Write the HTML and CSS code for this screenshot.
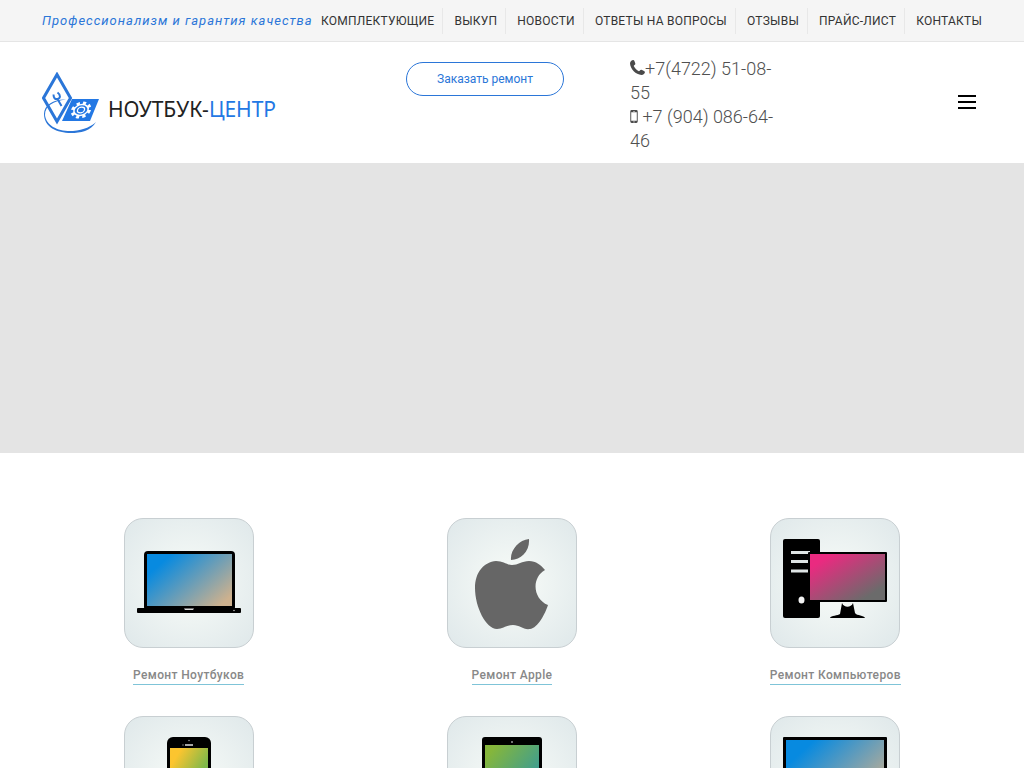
FILE: index.html
```html
<!DOCTYPE html>
<html lang="ru">
<head>
<meta charset="utf-8">
<meta name="viewport" content="width=device-width, initial-scale=1">
<title>Ноутбук-Центр</title>
<link rel="stylesheet" href="styles.css">
</head>
<body>
<div class="topbar">
  <span class="tagline">Профессионализм и гарантия качества</span>
  <nav class="topnav">
    <a href="#">Комплектующие</a>
    <a href="#">Выкуп</a>
    <a href="#">Новости</a>
    <a href="#">Ответы на вопросы</a>
    <a href="#">Отзывы</a>
    <a href="#">Прайс-лист</a>
    <a href="#">Контакты</a>
  </nav>
</div>
<header class="header">
  <a class="logo" href="#">
    <svg class="logo-mark" viewBox="0 0 58 62" aria-hidden="true">
      <path d="M15 2.500 28.500 26 15 49.500 1.500 26Z" fill="none" stroke="#2b76d8" stroke-width="3"/>
      <path d="M30 27H57L48 49H20Z" fill="#2378e4"/>
      <path d="M24 27.500C11 29 3 34 3 43C4 54 17 60 31 59C42 58 50 54 54 50C49 59 38 61 29 61C15 61 2 55 2 42C2 33 12 27 24 27.500Z" fill="#2b76d8"/>
      <path d="M11.500 22.500C11.500 26 13 27.500 15.500 27C18.500 26.500 19 23 15.500 20.500M15.500 27 19.500 34" fill="none" stroke="#2b76d8" stroke-width="2"/>
      <g transform="translate(39 38) skewX(-14)">
        <ellipse rx="8.500" ry="7" fill="none" stroke="#fff" stroke-width="3" stroke-dasharray="3.100 3"/>
        <ellipse rx="7" ry="5.500" fill="#2378e4" stroke="#fff" stroke-width="1.500"/>
        <ellipse rx="3.500" ry="2.800" fill="none" stroke="#fff" stroke-width="1.200"/>
      </g>
    </svg>
    <span class="logo-text">НОУТБУК-<span class="logo-accent">ЦЕНТР</span></span>
  </a>
  <button class="order" type="button">Заказать ремонт</button>
  <div class="phones">
    <div><svg class="ico-phone" viewBox="0 0 14 14" aria-hidden="true"><path d="M3.200 0C4 .1 5 3 5 3.700C5 4.500 3.500 5 3.500 5.700C4.400 7.700 6.200 9.500 8.300 10.500C9 10.500 9.500 9 10.300 9C11 9 13.800 10.500 14 11C14 12.800 12.500 14 10.700 14C5.500 13.700.3 8.500 0 3.300C0 1.500 1.500 0 3.200 0Z" fill="#4a4a4a"/></svg>+7(4722) 51-08-55</div>
    <div><svg class="ico-mobile" viewBox="0 0 8 14" aria-hidden="true"><path fill-rule="evenodd" d="M1.500 0H6.500Q8 0 8 1.500V12.500Q8 14 6.500 14H1.500Q0 14 0 12.500V1.500Q0 0 1.500 0ZM1 2.500V11.500H7V2.500ZM3 1V1.500H5V1ZM4 12.200A.6.6 0 1 0 4 13.400A.6.6 0 1 0 4 12.200Z" fill="#4a4a4a"/></svg> +7 (904) 086-64-46</div>
  </div>
  <button class="burger" type="button" aria-label="Меню"><i></i><i></i><i></i></button>
</header>
<div class="banner"></div>
<svg width="0" height="0" class="defs" aria-hidden="true">
  <defs>
    <linearGradient id="blue" x1="0" y1="0.200" x2="1" y2="0.900"><stop offset=".1" stop-color="#078ae0"/><stop offset=".95" stop-color="#cdb18e"/></linearGradient>
    <linearGradient id="pink" x1="0" y1="0" x2="1" y2="1"><stop offset=".15" stop-color="#ea2a80"/><stop offset=".85" stop-color="#6b6b6b"/></linearGradient>
    <linearGradient id="yellow" x1="0" y1="0" x2="1" y2="1"><stop offset=".15" stop-color="#fcc52f"/><stop offset=".6" stop-color="#7fb84a"/></linearGradient>
    <linearGradient id="green" x1="0" y1="0" x2="1" y2="1"><stop offset=".1" stop-color="#85b63b"/><stop offset=".7" stop-color="#3b9c94"/></linearGradient>
  </defs>
</svg>
<main class="services">
  <a class="service" href="#">
    <svg class="tile" viewBox="0 0 128 128" aria-hidden="true">
      <rect x="19" y="32" width="91" height="60" rx="4"/><rect x="12" y="89" width="104" height="5" rx="1"/>
      <rect x="22" y="35" width="85" height="52" fill="url(#blue)"/>
      <path d="M59 89.500H69L68 91H60Z" fill="#ddd"/><circle cx="109" cy="91.500" r=".7" fill="#ddd"/>
    </svg>
    <span class="caption">Ремонт Ноутбуков</span>
  </a>
  <a class="service" href="#">
    <svg class="tile" viewBox="0 0 128 128" aria-hidden="true">
      <path d="M81 20C82 32 73 41 63 41C62 31 71 21 81 20ZM64 46C70 46 74 42 81 42C88 42 93 46 97 51C83 59 85 80 100 86C97 95 90 109 82 110C75 111 72 106 65 106C58 106 55 110 49 110C38 110 27 88 27 69C27 53 36 43 48 42C55 42 59 46 64 46Z" fill="#666"/>
    </svg>
    <span class="caption">Ремонт Apple</span>
  </a>
  <a class="service" href="#">
    <svg class="tile" viewBox="0 0 128 128" aria-hidden="true">
      <rect x="12" y="20" width="37" height="79" rx="2"/>
      <path d="M20 33.500H39M20 42.500H37M20 52H37" stroke="#dfe5e5" stroke-width="3"/><ellipse cx="30.500" cy="81" rx="3" ry="3.500" fill="#f2f2f2"/>
      <rect x="37" y="33" width="79" height="50" rx="1"/><rect x="39" y="35" width="75" height="46" fill="url(#pink)"/>
      <path d="M71 84C73 89 80 89 82 84L84 94C86 97 93 96 94 99H59C60 96 67 97 69 95Z"/>
    </svg>
    <span class="caption">Ремонт Компьютеров</span>
  </a>
  <a class="service" href="#" aria-label="Смартфоны">
    <svg class="tile" viewBox="0 0 128 128" aria-hidden="true">
      <rect x="42" y="20" width="44" height="88" rx="6"/><rect x="45" y="31" width="38" height="64" fill="url(#yellow)"/>
      <path d="M60 28H68" stroke="#ddd" stroke-width="1.500"/><circle cx="64" cy="23.500" r=".8" fill="#999"/><circle cx="58" cy="28" r=".7" fill="#999"/>
    </svg>
  </a>
  <a class="service" href="#" aria-label="Планшеты">
    <svg class="tile" viewBox="0 0 128 128" aria-hidden="true">
      <rect x="34" y="20" width="60" height="88" rx="3"/><rect x="37" y="28" width="54" height="70" fill="url(#green)"/><circle cx="64" cy="25" r="1" fill="#999"/>
    </svg>
  </a>
  <a class="service" href="#" aria-label="Мониторы">
    <svg class="tile" viewBox="0 0 128 128" aria-hidden="true">
      <rect x="12" y="20" width="104" height="70" rx="1"/><rect x="15" y="23" width="98" height="64" fill="url(#blue)"/><path d="M56 90H72L76 102H52Z"/>
    </svg>
  </a>
</main>
</body>
</html>
```
FILE: styles.css
```css
* { box-sizing: border-box; }
body { margin: 0; background: #fff; color: #333; font-family: Roboto, "Liberation Sans", sans-serif; font-size: 12px; }
a { color: inherit; text-decoration: none; }
svg { display: block; }
.topbar { display: flex; align-items: center; justify-content: space-between; height: 42px; padding: 0 42px; background: #f5f5f5; border-bottom: 1px solid #e5e5e5; white-space: nowrap; }
.tagline { color: #2b76d8; font-size: 13px; font-style: italic; letter-spacing: 1px; }
.topnav { display: flex; }
.topnav a { padding: 0 8px 0 11px; border-right: 1px solid #e8e8e8; line-height: 26px; letter-spacing: 0.02em; text-transform: uppercase; }
.topnav a:first-child { padding-left: 0; }
.topnav a:last-child { padding-right: 0; border-right: 0; }
.header { display: grid; grid-template-columns: 364fr 224fr 150fr 202fr; padding: 15px 42px 10px; }
.logo { display: flex; align-items: center; gap: 8px; align-self: center; padding-bottom: 4px; }
.logo-mark { width: 58px; height: 62px; }
.logo-text { color: #222; font-family: "Noto Sans", sans-serif; font-size: 21px; line-height: 28px; padding-top: 12px; }
.logo-accent { color: #2378e4; }
.order { justify-self: start; align-self: start; margin-top: 5px; height: 34px; padding: 0 30px; border: 1px solid #2b76d8; border-radius: 17px; background: #fff; color: #2b76d8; font-family: inherit; font-size: 12px; }
.phones { color: #505050; font-size: 18px; font-weight: 300; line-height: 24px; }
.phones svg { display: inline-block; }
.ico-phone { width: 15px; height: 15px; }
.ico-mobile { width: 8px; height: 13px; }
.burger { display: flex; flex-direction: column; gap: 4px; justify-self: end; align-self: center; margin: 0 6px 6px 0; padding: 0; border: 0; background: none; }
.burger i { width: 18px; height: 2px; background: #000; }
.banner { height: 290px; background: #e4e4e4; }
.defs { position: absolute; }
.services { display: grid; grid-template-columns: repeat(3, 1fr); row-gap: 31px; padding: 65px 27px 0; }
.service { display: flex; flex-direction: column; align-items: center; }
.tile { width: 130px; height: 130px; border: 1px solid #c8cfd2; border-radius: 19px; background: radial-gradient(circle, #f6faf7 10%, #dfe8ea 100%); }
.caption { margin-top: 18px; border-bottom: 1px solid #7fc4d8; color: #888; font-weight: 500; line-height: 18px; letter-spacing: 0.03em; }
```
